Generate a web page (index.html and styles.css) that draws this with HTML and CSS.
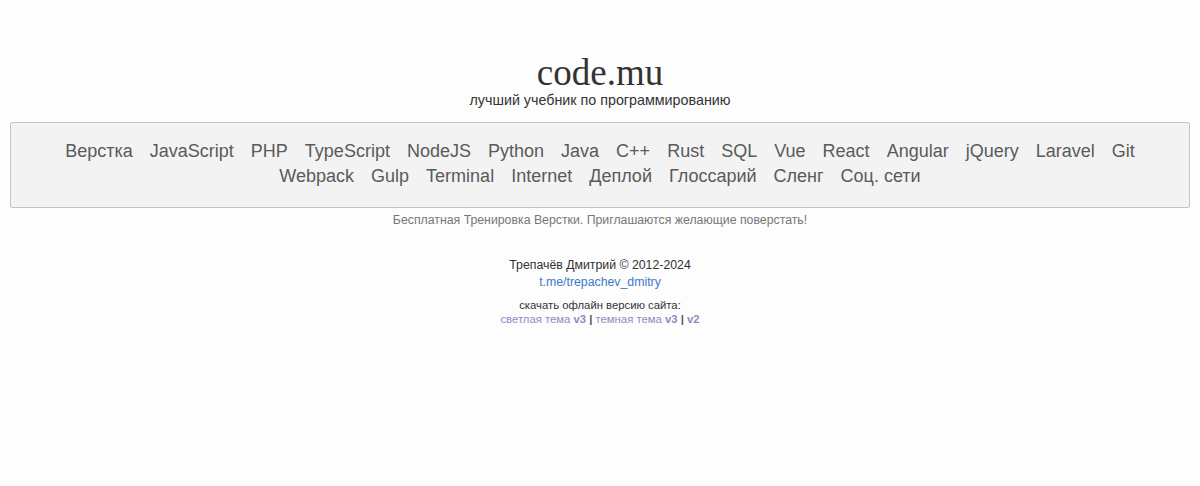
FILE: index.html
```html
<!DOCTYPE html>
<html lang="ru">
<head>
<meta charset="utf-8">
<title>code.mu</title>
<link rel="stylesheet" href="styles.css">
</head>
<body>
<header class="site-header">
  <div class="logo">code.mu</div>
  <div class="slogan">лучший учебник по программированию</div>
</header>
<nav class="menu">
  <a href="#">Верстка</a>
  <a href="#">JavaScript</a>
  <a href="#">PHP</a>
  <a href="#">TypeScript</a>
  <a href="#">NodeJS</a>
  <a href="#">Python</a>
  <a href="#">Java</a>
  <a href="#">C++</a>
  <a href="#">Rust</a>
  <a href="#">SQL</a>
  <a href="#">Vue</a>
  <a href="#">React</a>
  <a href="#">Angular</a>
  <a href="#">jQuery</a>
  <a href="#">Laravel</a>
  <a href="#">Git</a>
  <a href="#">Webpack</a>
  <a href="#">Gulp</a>
  <a href="#">Terminal</a>
  <a href="#">Internet</a>
  <a href="#">Деплой</a>
  <a href="#">Глоссарий</a>
  <a href="#">Сленг</a>
  <a href="#">Соц. сети</a>
</nav>
<p class="promo">Бесплатная Тренировка Верстки. Приглашаются желающие поверстать!</p>
<footer class="footer">
  <div class="copy">Трепачёв Дмитрий © 2012-2024</div>
  <div class="contact"><a href="#">t.me/trepachev_dmitry</a></div>
  <div class="offline">
    <div class="offline-title">скачать офлайн версию сайта:</div>
    <div class="offline-links"><a href="#">светлая тема <b>v3</b></a> <b class="sep">|</b> <a href="#">темная тема <b>v3</b></a> <b class="sep">|</b> <a href="#"><b>v2</b></a></div>
  </div>
</footer>
</body>
</html>
```
FILE: styles.css
```css
html, body {
  background: #fdfdfd;
}
body {
  margin: 0;
  padding: 0 10px;
  font-family: "Liberation Sans", Arial, sans-serif;
  color: #333;
}
.site-header {
  text-align: center;
  padding-top: 54px;
}
.logo {
  font-family: "Liberation Serif", "Times New Roman", serif;
  font-size: 37px;
  line-height: 38px;
  color: #333;
}
.slogan {
  font-size: 14.3px;
  line-height: 16px;
  color: #333;
}
.menu {
  margin-top: 14px;
  border: 1px solid #c4c4c4;
  border-radius: 2px;
  background: #f3f3f3;
  padding: 16px 30px 18px;
  text-align: center;
  font-size: 18px;
  line-height: 25px;
}
.menu a {
  color: #5a5a5a;
  text-decoration: none;
  margin: 0 6px;
}
.promo {
  margin: 5px 0 0;
  text-align: center;
  font-size: 12.3px;
  line-height: 14px;
  color: #777;
}
.footer {
  text-align: center;
  font-size: 12.3px;
  margin-top: 30px;
}
.copy {
  line-height: 16px;
}
.contact {
  line-height: 16px;
  margin-top: 1px;
}
.contact a {
  color: #3b7ac8;
  text-decoration: none;
}
.offline {
  margin-top: 8px;
  font-size: 11.3px;
  line-height: 14px;
}
.offline-links a {
  color: #8c8cc2;
  text-decoration: none;
}
.offline-links .sep {
  color: #555;
}
```
